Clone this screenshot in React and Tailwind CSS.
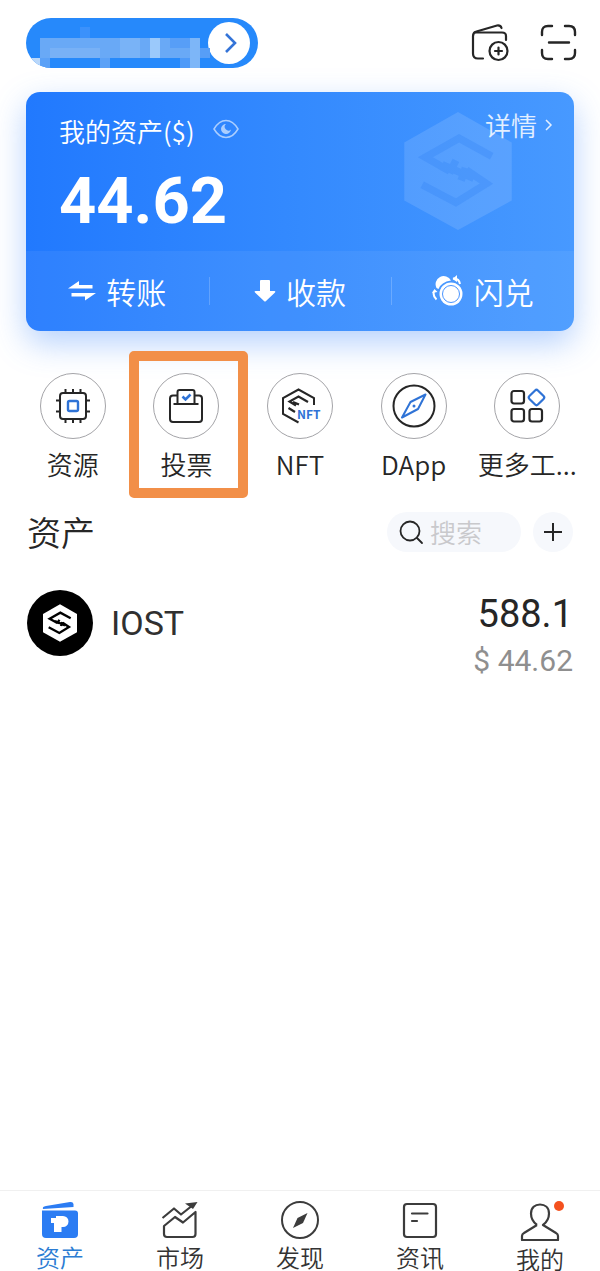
import clsx from "clsx";

const HexLogo = ({ className, sColor }) => (
  <svg viewBox="0 0 102 112" className={className} aria-hidden="true">
    <path d="M51 0 102 29V84L51 112 0 84V29Z" fill="currentColor" />
    <path
      d="M83 42 52 25 20 43 43 56 34 51M59 55 78 68 49 86 17 69M36 50 66 63M49 46 43 58M58 53 54 65"
      fill="none"
      stroke={sColor}
      strokeWidth="7"
    />
  </svg>
);

const WalletAddIcon = () => (
  <svg width="40" height="40" viewBox="0 0 40 40" fill="none" stroke="#262626" strokeWidth="2.2" strokeLinecap="round">
    <path d="M13 35.500H8Q3 35.500 3 30.500V13Q3 9.500 6.500 8.500L27 2.500Q30.500 2 31.500 5" />
    <path d="M4.500 9.500H32Q36 9.500 36 13V17" />
    <circle cx="28.500" cy="28" r="9" />
    <path d="M28.500 24.500V31.500M25 28H32" />
  </svg>
);

const ScanIcon = () => (
  <svg width="38" height="38" viewBox="0 0 38 38" fill="none" stroke="#262626" strokeWidth="2.400" strokeLinecap="round">
    <path d="M2 11V8Q2 2 8 2H12M25 2H29Q35 2 35 8V11M35 26V29Q35 35 29 35H25M12 35H8Q2 35 2 29V26M9 18.500H29" />
  </svg>
);

const EyeIcon = () => (
  <svg width="26" height="20" viewBox="0 0 26 20" fill="none" className="text-white/60">
    <path d="M1 10Q6 1.500 13 1.500T25 10Q20 18.500 13 18.500T1 10Z" stroke="currentColor" strokeWidth="1.500" />
    <path d="M13 5a5 5 0 1 0 5 5.500 3.500 3.500 0 0 1-5-5.500Z" fill="currentColor" />
  </svg>
);

const TransferIcon = () => (
  <svg width="28" height="24" viewBox="0 0 28 24" fill="#fff">
    <path d="M0 9.500 11 2V6H24.500V9.500ZM28 14 17 21.500V17.500H3.500V14Z" />
  </svg>
);

const ReceiveIcon = () => (
  <svg width="22" height="24" viewBox="0 0 22 24" fill="#fff">
    <path d="M6 2Q6 1 7 1H15Q16 1 16 2V12H20.500Q22 12 21 13.500L12 22Q11 23 10 22L1 13.500Q0 12 1.500 12H6Z" />
  </svg>
);

const SwapIcon = () => (
  <svg width="32" height="32" viewBox="0 0 32 32" fill="none">
    <path d="M4.500 13A8 8 0 0 1 19 5.500Q9 7 6.500 14Z" fill="#fff" />
    <circle cx="19" cy="19" r="11.500" fill="#fff" />
    <circle cx="19" cy="19" r="8.500" stroke="#4a95ff" strokeWidth="1" />
    <path d="M21 3.500Q27 3 28 9M2 16Q0.500 21 4.500 24.500" stroke="#fff" strokeWidth="2" />
    <path d="M20.500 4 25 0V7ZM0 18 5.500 17 2.500 14Z" fill="#fff" />
  </svg>
);

const ChipIcon = () => (
  <svg width="36" height="36" viewBox="0 0 36 36" fill="none" stroke="#262626" strokeWidth="2">
    <rect x="5" y="5" width="26" height="26" rx="3" />
    <path d="M10.500 1V5M18 1V5M25.500 1V5M10.500 31V35M18 31V35M25.500 31V35M1 12.500H5M1 23.500H5M31 12.500H35M31 23.500H35" />
    <rect x="13" y="13" width="10" height="10" rx="1.500" stroke="#2f73d6" strokeWidth="2.400" />
  </svg>
);

const VoteIcon = () => (
  <svg width="36" height="36" viewBox="0 0 36 36" fill="none" stroke="#262626" strokeWidth="2">
    <path d="M9.500 7.500H5Q2 7.500 2 10.500V31Q2 34 5 34H31Q34 34 34 31V10.500Q34 7.500 31 7.500H26.500" />
    <path d="M9.500 16V4Q9.500 2 11.500 2H24.500Q26.500 2 26.500 4V16M5.500 16H30.500" />
    <path d="M14.500 8.500 17.500 11.500 22.500 6.500" stroke="#2f73d6" strokeWidth="2.600" />
  </svg>
);

const NftIcon = () => (
  <svg width="40" height="36" viewBox="0 0 40 36" fill="none" stroke="#262626" strokeWidth="2" className="overflow-visible">
    <path d="M18.500 34.500 3 26V10L18.500 1.500 34 10V17" />
    <path d="M28 14 18.500 8.500 9.500 13.500 16 17.500M13 14 19 16.500M8.500 20 15 24" strokeWidth="2.200" />
    <text x="17" y="31" fill="#2f73d6" stroke="none" className="font-['Noto_Sans_CJK_SC',sans-serif] text-[12px] font-bold">
      NFT
    </text>
  </svg>
);

const DappIcon = () => (
  <svg width="44" height="44" viewBox="0 0 44 44" fill="none" stroke="#262626" strokeWidth="2">
    <circle cx="22" cy="22" r="20.500" />
    <path d="M33.500 10.500 26 25 10 33.500 18.500 18Z" stroke="#2f73d6" strokeLinejoin="round" />
    <circle cx="22" cy="22" r="1.500" fill="#2f73d6" stroke="none" />
  </svg>
);

const MoreIcon = () => (
  <svg width="36" height="36" viewBox="0 0 36 36" fill="none" stroke="#262626" strokeWidth="2.200" className="overflow-visible">
    <rect x="2.500" y="3" width="12.500" height="12.500" rx="2.500" />
    <rect x="2.500" y="21" width="12.500" height="12.500" rx="2.500" />
    <rect x="20.500" y="21" width="12.500" height="12.500" rx="2.500" />
    <rect x="21.500" y="3.500" width="12" height="12" rx="2" stroke="#2f73d6" transform="rotate(45 27.500 9.500)" />
  </svg>
);

const WalletIcon = () => (
  <svg width="38" height="38" viewBox="0 0 38 38">
    <path d="M2 8Q1 5.500 5 5L29 1Q32 0.500 32.500 3V6Z" fill="#2b7cf3" />
    <path d="M1 9.500H34Q37 9.500 37 12.500V33Q37 37 33 37H5Q1 37 1 33Z" fill="#2b7cf3" />
    <path d="M10 17H15V15H22A5.500 5.500 0 0 1 22 26H20.500V31H13V22H10Z" fill="#fff" />
  </svg>
);

const MarketIcon = () => (
  <svg width="38" height="38" viewBox="0 0 38 38" fill="none" stroke="#3c3c3c" strokeWidth="2.200" strokeLinejoin="round">
    <path d="M1.500 17 13 7.500 20 13.500 32 4" />
    <path d="M24 2.500 36.500 1 32 8Z" fill="#3c3c3c" stroke="none" />
    <path d="M3 25 14 16 22 21.500 34.500 11V33Q34.500 36 31.500 36H6Q3 36 3 33Z" />
  </svg>
);

const DiscoverIcon = () => (
  <svg width="38" height="38" viewBox="0 0 38 38" fill="none" stroke="#3c3c3c" strokeWidth="2">
    <circle cx="19" cy="19" r="18" />
    <path d="M26.500 12 22 22 12 27 16.500 17Z" fill="#3c3c3c" stroke="none" />
  </svg>
);

const NewsIcon = () => (
  <svg width="38" height="38" viewBox="0 0 38 38" fill="none" stroke="#3c3c3c" strokeWidth="2.200" strokeLinecap="round">
    <rect x="3" y="3" width="32" height="33" rx="3" />
    <path d="M11 12.500H26.500M11 20H16" />
  </svg>
);

const MeIcon = () => (
  <svg width="40" height="38" viewBox="0 0 40 38" fill="none" stroke="#3c3c3c" strokeWidth="2.200" strokeLinejoin="round">
    <path d="M17 22C13 19 11 15 11 10.500 11 4.500 15 1.500 20 1.500S29 4.500 29 10.500C29 15 27 19 23 22L36 30Q38 31 38 33V37H2V33Q2 31 4 30L17 22" />
  </svg>
);

// blocks covering the account name
const blocks = [
  [14, 20, 160, 20, "#69a9f6"],
  [14, 40, 10, 10, "#5ba1f7"],
  [54, 9, 10, 11, "#3b91fb"],
  [74, 40, 10, 10, "#5ba1f7"],
  [94, 20, 20, 20, "#79b3f7"],
  [24, 30, 50, 10, "#78b1f6"],
  [124, 20, 10, 20, "#9bc9fb"],
  [144, 20, 20, 10, "#579ef7"],
  [154, 40, 20, 10, "#4e9af8"],
  [164, 20, 10, 30, "#7db6f8"],
  [174, 30, 10, 10, "#579ef7"],
];

const actions = [
  { label: "转账", Icon: TransferIcon },
  { label: "收款", Icon: ReceiveIcon },
  { label: "闪兑", Icon: SwapIcon },
];

const tools = [
  { label: "资源", Icon: ChipIcon },
  { label: "投票", Icon: VoteIcon, marked: true },
  { label: "NFT", Icon: NftIcon },
  { label: "DApp", Icon: DappIcon },
  { label: "更多工...", Icon: MoreIcon },
];

const tabs = [
  { label: "资产", Icon: WalletIcon, active: true },
  { label: "市场", Icon: MarketIcon },
  { label: "发现", Icon: DiscoverIcon },
  { label: "资讯", Icon: NewsIcon },
  { label: "我的", Icon: MeIcon, dot: true },
];

const Header = () => (
  <header className="flex items-center justify-between pt-[18px] pr-[22px] pl-[26px]">
    <button
      type="button"
      aria-label="切换账户"
      className="relative flex h-[50px] w-[232px] items-center justify-end overflow-hidden rounded-full bg-[#2689fb] pr-2"
    >
      <span className="flex size-[42px] items-center justify-center rounded-full bg-white pl-1">
        <svg width="14" height="22" viewBox="0 0 14 22" fill="none" stroke="#3474d8" strokeWidth="2.600">
          <path d="M2 2 11 11 2 20" />
        </svg>
      </span>
      <svg width="232" height="50" className="absolute inset-0" aria-hidden="true">
        {blocks.map(([x, y, w, h, fill], i) => (
          <rect key={i} x={x} y={y} width={w} height={h} fill={fill} />
        ))}
        <path d="M4 40H14V50Z" fill="#b9d7fa" />
      </svg>
    </button>
    <div className="flex gap-[30px]">
      <button type="button" aria-label="添加钱包"><WalletAddIcon /></button>
      <button type="button" aria-label="扫一扫"><ScanIcon /></button>
    </div>
  </header>
);

const BalanceCard = () => (
  <section className="relative mx-[26px] mt-6 rounded-[14px] bg-linear-to-r from-[#2179fe] via-[#348afe] to-[#4799ff] text-white shadow-[0_12px_32px_rgba(70,140,250,0.4)]">
    <HexLogo className="absolute top-5 right-[62px] h-[118px] w-[108px] text-white/12" sColor="rgba(40,125,245,0.25)" />
    <div className="relative h-[159px] px-[33px] pt-[19px]">
      <div className="flex items-start justify-between">
        <div className="flex items-center gap-[18px] pt-1">
          <h2 className="text-[26px] leading-8">我的资产($)</h2>
          <button type="button" aria-label="隐藏余额" className="pb-1"><EyeIcon /></button>
        </div>
        <a href="#detail" className="-mr-3 flex items-center gap-2 text-[26px] leading-[28px] text-white/85">
          详情
          <svg width="8" height="14" viewBox="0 0 8 14" fill="none" stroke="currentColor" strokeWidth="1.500">
            <path d="M1 2 6 7 1 12" />
          </svg>
        </a>
      </div>
      <p className="mt-[14px] font-[Roboto,sans-serif] text-[65px] leading-[80px] font-bold">44.62</p>
    </div>
    <div className="relative grid h-20 grid-cols-3 rounded-b-[14px] bg-white/6">
      {actions.map(({ label, Icon }, i) => (
        <button
          key={label}
          type="button"
          className="relative flex items-center justify-center gap-[10px] text-[30px]"
        >
          {i > 0 && <span className="absolute left-0 h-7 w-px bg-white/20" />}
          <Icon />
          {label}
        </button>
      ))}
    </div>
  </section>
);

const Tools = () => (
  <nav className="mt-[42px] grid grid-cols-5 px-4">
    {tools.map(({ label, Icon, marked }) => (
      <a key={label} href="#tool" className="relative flex flex-col items-center gap-[9px]">
        <span className="flex size-[66px] items-center justify-center rounded-full border border-[#a4a4a8] bg-white">
          <Icon />
        </span>
        <span className="text-[26px] leading-8 whitespace-nowrap">{label}</span>
        {marked && (
          <span className="absolute -top-[22px] -right-[5px] -bottom-[18px] -left-px rounded-[5px] border-10 border-[#f28f48]" />
        )}
      </a>
    ))}
  </nav>
);

const Assets = () => (
  <section className="flex-1 px-[27px]">
    <div className="mt-8 flex items-center">
      <h2 className="flex-1 text-[34px] leading-10">资产</h2>
      <label className="flex h-10 w-[134px] items-center gap-[6px] rounded-full bg-[#f6f8fc] pl-3">
        <svg width="25" height="25" viewBox="0 0 25 25" fill="none" stroke="#262626" strokeWidth="1.800" strokeLinecap="round">
          <circle cx="11" cy="11" r="9.500" />
          <path d="M18 18 23 23" />
        </svg>
        <input
          type="search"
          aria-label="搜索"
          placeholder="搜索"
          className="w-20 min-w-0 bg-transparent text-[26px] leading-8 outline-none placeholder:text-[#c9c9cc]"
        />
      </label>
      <button type="button" aria-label="添加资产" className="ml-3 flex size-10 items-center justify-center rounded-full bg-[#f6f8fc]">
        <svg width="18" height="18" viewBox="0 0 18 18" stroke="#262626" strokeWidth="2">
          <path d="M9 0V18M0 9H18" />
        </svg>
      </button>
    </div>

    <a href="#iost" className="mt-[38px] flex items-start font-[Roboto,sans-serif] font-normal">
      <span className="flex size-[66px] items-center justify-center rounded-full bg-black">
        <HexLogo className="h-[38px] w-[34px] text-white" sColor="#000" />
      </span>
      <span className="ml-[18px] flex-1 text-[34px] leading-[66px] text-[#303030]">IOST</span>
      <span className="flex flex-col items-end">
        <span className="text-[38px] leading-[48px]">588.1</span>
        <span className="text-[30px] leading-[46px] text-[#8f8f8f]">$ 44.62</span>
      </span>
    </a>
  </section>
);

const TabBar = () => (
  <nav className="grid h-[81px] grid-cols-5 overflow-hidden border-t border-[#f0f0f0]">
    {tabs.map(({ label, Icon, active, dot }) => (
      <a
        key={label}
        href="#tab"
        className={clsx(
          "relative flex flex-col items-center gap-[6px] text-2xl leading-6",
          dot ? "pt-3" : "pt-[10px]",
          active ? "text-[#2b7cd3]" : "text-[#333]"
        )}
      >
        <Icon />
        {label}
        {dot && <span className="absolute top-[10px] right-9 size-[10px] rounded-full bg-[#f4511e]" />}
      </a>
    ))}
  </nav>
);

export default function App() {
  return (
    <div className="flex min-h-screen flex-col bg-white font-['Noto_Sans_CJK_SC',sans-serif] font-[350] text-[#262626]">
      <Header />
      <BalanceCard />
      <Tools />
      <Assets />
      <TabBar />
    </div>
  );
}
